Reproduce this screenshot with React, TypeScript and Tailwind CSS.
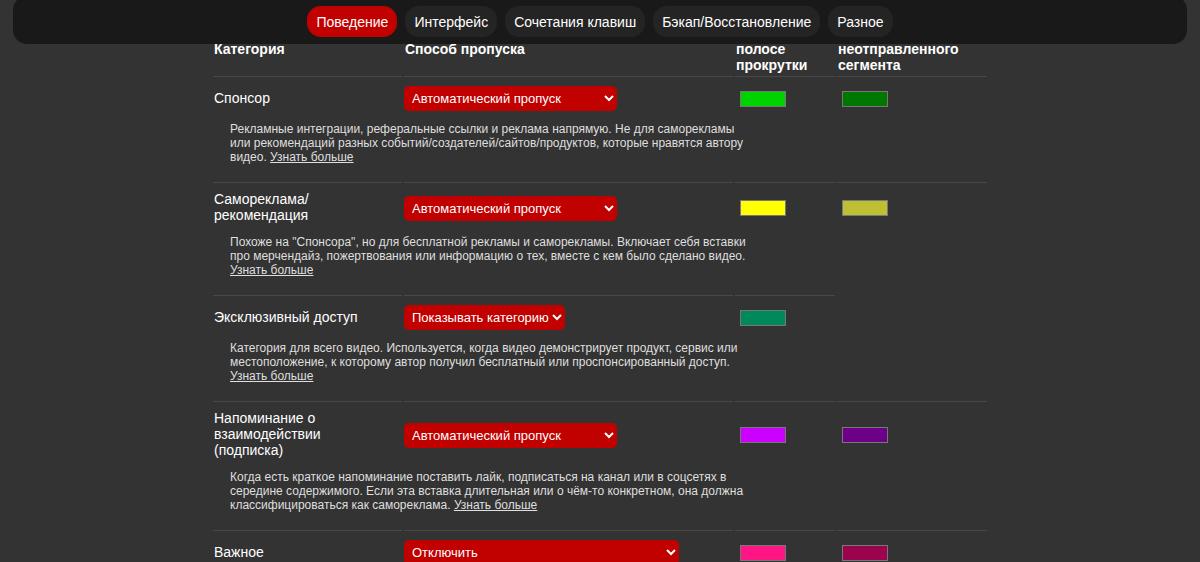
import clsx from "clsx";

type Category = {
  id: string;
  title: string;
  option: string;
  selectWidth: string;
  description?: string[];
  color: string;
  previewColor?: string;
};

const tabs = [
  "Поведение",
  "Интерфейс",
  "Сочетания клавиш",
  "Бэкап/Восстановление",
  "Разное",
];

const skipOptions = [
  "Отключить",
  "Показывать категорию",
  "Автоматический пропуск",
];

const categories: Category[] = [
  {
    id: "sponsor",
    title: "Спонсор",
    option: "Автоматический пропуск",
    selectWidth: "w-[213px]",
    description: [
      "Рекламные интеграции, реферальные ссылки и реклама напрямую. Не для саморекламы",
      "или рекомендаций разных событий/создателей/сайтов/продуктов, которые нравятся автору",
      "видео. ",
    ],
    color: "#00d400",
    previewColor: "#007800",
  },
  {
    id: "selfpromo",
    title: "Самореклама/рекомендация",
    option: "Автоматический пропуск",
    selectWidth: "w-[213px]",
    description: [
      'Похоже на "Спонсора", но для бесплатной рекламы и саморекламы. Включает себя вставки',
      "про мерчендайз, пожертвования или информацию о тех, вместе с кем было сделано видео.",
      "",
    ],
    color: "#ffff00",
    previewColor: "#bfbf35",
  },
  {
    id: "exclusive_access",
    title: "Эксклюзивный доступ",
    option: "Показывать категорию",
    selectWidth: "w-[161px]",
    description: [
      "Категория для всего видео. Используется, когда видео демонстрирует продукт, сервис или",
      "местоположение, к которому автор получил бесплатный или проспонсированный доступ.",
      "",
    ],
    color: "#008a5c",
  },
  {
    id: "interaction",
    title: "Напоминание о взаимодействии (подписка)",
    option: "Автоматический пропуск",
    selectWidth: "w-[213px]",
    description: [
      "Когда есть краткое напоминание поставить лайк, подписаться на канал или в соцсетях в",
      "середине содержимого. Если эта вставка длительная или о чём-то конкретном, она должна",
      "классифицироваться как самореклама. ",
    ],
    color: "#cc00ff",
    previewColor: "#6c0087",
  },
  {
    id: "poi_highlight",
    title: "Важное",
    option: "Отключить",
    selectWidth: "w-[275px]",
    color: "#ff1684",
    previewColor: "#9b044c",
  },
];

function ColorInput({ label, value }: { label: string; value: string }) {
  return (
    <input
      type="color"
      aria-label={label}
      defaultValue={value}
      className="block ml-1 h-4 w-[46px] appearance-none border border-[#777] p-0 [&::-webkit-color-swatch-wrapper]:p-0 [&::-webkit-color-swatch]:rounded-none [&::-webkit-color-swatch]:border-0"
    />
  );
}

function CategoryRows({ category }: { category: Category }) {
  return (
    <>
      <tr>
        <td className="border-t border-[#484848] pt-2 pr-5 pb-[10px] pl-px">
          <label htmlFor={category.id} className="block">
            {category.title.split("/").map((part, i) => (
              <span key={part}>
                {i > 0 && (
                  <>
                    /<wbr />
                  </>
                )}
                {part}
              </span>
            ))}
          </label>
        </td>
        <td className="border-t border-[#484848] py-[9px]">
          <select
            id={category.id}
            defaultValue={category.option}
            className={clsx(
              "block h-[25px] rounded-[5px] bg-[#c10000] pl-1 pr-0 text-[13px] text-white",
              category.selectWidth
            )}
          >
            {skipOptions.map((option) => (
              <option key={option}>{option}</option>
            ))}
          </select>
        </td>
        <td className="border-t border-[#484848] px-px py-[9px]">
          <ColorInput
            label={`${category.title}: цвет на полосе прокрутки`}
            value={category.color}
          />
        </td>
        {category.previewColor && (
          <td className="border-t border-[#484848] px-px py-[9px]">
            <ColorInput
              label={`${category.title}: цвет неотправленного сегмента`}
              value={category.previewColor}
            />
          </td>
        )}
      </tr>
      {category.description && (
        <tr className="h-[62px]">
          <td
            colSpan={2}
            className="pl-[17px] pt-[2px] align-top text-[12px] leading-[14px] whitespace-nowrap text-[#dfdfdf]"
          >
            {category.description.map((line, i) => (
              <span key={i}>
                {i > 0 && <br />}
                {line}
              </span>
            ))}
            <a href="#" className="underline">
              Узнать больше
            </a>
          </td>
        </tr>
      )}
    </>
  );
}

function App() {
  return (
    <div className="min-h-screen bg-[#333] font-['Liberation_Sans',Arial,sans-serif] text-sm leading-4 text-white">
      <nav className="fixed inset-x-[13px] -top-1 z-10 flex justify-center gap-2 rounded-[14px] bg-[#191919] pt-[10px] pb-[7px]">
        {tabs.map((tab, i) => (
          <button
            key={tab}
            type="button"
            className={clsx(
              "h-[31px] rounded-[14px] px-[9px] whitespace-nowrap",
              i === 0 ? "bg-[#c10000]" : "bg-[#242424]"
            )}
          >
            {tab}
          </button>
        ))}
      </nav>

      <main className="pt-[25px]">
        <table className="mx-auto w-full max-w-[778px] table-fixed border-separate border-spacing-x-[2px] border-spacing-y-0">
          <colgroup>
            <col className="w-[189px]" />
            <col />
            <col className="w-[100px]" />
            <col className="w-[150px]" />
          </colgroup>
          <thead>
            <tr className="text-left">
              <th className="px-px pb-[3px]">Категория</th>
              <th className="px-px pb-[3px]">Способ пропуска</th>
              <th className="px-px pb-[3px]">Цвет на полосе прокрутки</th>
              <th className="px-px pb-[3px]">Цвет неотправленного сегмента</th>
            </tr>
          </thead>
          <tbody>
            {categories.map((category) => (
              <CategoryRows key={category.id} category={category} />
            ))}
          </tbody>
        </table>
      </main>
    </div>
  );
}

export default App;
